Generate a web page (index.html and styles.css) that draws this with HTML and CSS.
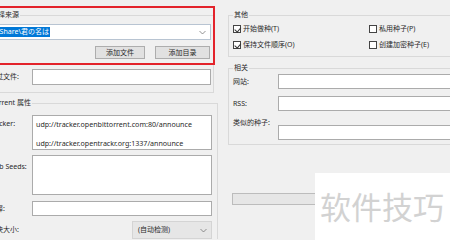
FILE: index.html
```html
<!DOCTYPE html>
<html lang="zh-CN">
<head>
  <meta charset="UTF-8">
  <title>创建 Torrent</title>
  <link rel="stylesheet" href="styles.css">
</head>
<body>
  <div class="Dialog">
    <div class="LeftColumn">
      <fieldset class="GroupBox SourceGroup">
        <legend>选择来源</legend>
        <div class="ComboBox PathCombo">
          <span class="Selected">\Share\君の名は</span>
          <svg class="Chevron" width="7" height="5" viewBox="0 0 7 5"><polyline points="0.5,1 3.5,4 6.5,1" fill="none" stroke="#666" stroke-width="0.7"/></svg>
        </div>
        <div class="ButtonRow">
          <button class="PushButton AddFile">添加文件</button>
          <button class="PushButton AddDir">添加目录</button>
        </div>
        <div class="FieldRow SkipRow">
          <label>跳过文件:</label>
          <div class="TextBox"></div>
        </div>
      </fieldset>

      <fieldset class="GroupBox PropsGroup">
        <legend>Torrent 属性</legend>
        <div class="FieldRow TrackerRow">
          <label>Tracker:</label>
          <div class="TextBox TrackerList">
            <div>udp://tracker.openbittorrent.com:80/announce</div>
            <div>udp://tracker.opentrackr.org:1337/announce</div>
          </div>
        </div>
        <div class="FieldRow SeedsRow">
          <label>Web Seeds:</label>
          <div class="TextBox SeedsList"></div>
        </div>
        <div class="FieldRow CommentRow">
          <label>注释:</label>
          <div class="TextBox"></div>
        </div>
        <div class="FieldRow PieceRow">
          <label>分块大小:</label>
          <div class="ComboBox PieceCombo">
            <span>(自动检测)</span>
            <svg class="Chevron" width="7" height="5" viewBox="0 0 7 5"><polyline points="0.5,1 3.5,4 6.5,1" fill="none" stroke="#666" stroke-width="0.7"/></svg>
          </div>
        </div>
      </fieldset>
      <div class="Highlight"></div>
    </div>

    <div class="RightColumn">
      <fieldset class="GroupBox OtherGroup">
        <legend>其他</legend>
        <div class="CheckGrid">
          <label class="Check"><span class="Box checked"></span>开始做种(T)</label>
          <label class="Check"><span class="Box"></span>私用种子(P)</label>
          <label class="Check"><span class="Box checked"></span>保持文件顺序(O)</label>
          <label class="Check"><span class="Box"></span>创建加密种子(E)</label>
        </div>
      </fieldset>

      <fieldset class="GroupBox RelatedGroup">
        <legend>相关</legend>
        <div class="FieldRow">
          <label>网站:</label>
          <div class="TextBox"></div>
        </div>
        <div class="FieldRow">
          <label>RSS:</label>
          <div class="TextBox"></div>
        </div>
        <div class="FieldRow SimilarRow">
          <label>类似的种子:</label>
          <div class="TextBox"></div>
        </div>
      </fieldset>

      <div class="ProgressBar"></div>
    </div>
  </div>

  <div class="Watermark">软件技巧</div>
</body>
</html>
```

FILE: styles.css
```css
* {
  margin: 0;
  padding: 0;
  box-sizing: border-box;
}

body {
  width: 450px;
  height: 240px;
  overflow: hidden;
  position: relative;
  background: #f0f0f0;
  font-family: "Segoe UI", "Noto Sans", "Noto Sans CJK SC", sans-serif;
  font-size: 7px;
  line-height: 12px;
  color: #2a2a2a;
}

.Dialog {
  display: grid;
  grid-template-columns: 238px 240px;
  column-gap: 10px;
  margin-left: -20px;
}

/* Group boxes */
.GroupBox {
  border: 1px solid #d9d9d9;
}

.GroupBox legend {
  padding: 0 1px;
  line-height: 12px;
}

.LeftColumn {
  position: relative;
}

.SourceGroup {
  margin-top: 9px;
  width: 234px;
  padding: 3px 2px 7px 8px;
}

.SourceGroup legend {
  margin-left: 1px;
}

.PropsGroup {
  margin-top: 4px;
  width: 238px;
  height: 142px;
  border-bottom: none;
  padding: 3px 5px 0 8px;
}

.PropsGroup legend {
  margin-left: 1px;
}

.Highlight {
  position: absolute;
  top: 6px;
  left: -10px;
  width: 245px;
  height: 59px;
  border: 2px solid #e3232b;
}

/* Inputs */
.TextBox {
  background: #fff;
  border: 1px solid #ababab;
  height: 16px;
}

.ComboBox {
  display: flex;
  align-items: center;
  justify-content: space-between;
  height: 16px;
  border: 1px solid #b8c4d2;
  background: #fff;
  padding: 0 4px 0 2px;
}

.Chevron {
  flex-shrink: 0;
}

.PathCombo {
  padding-left: 6px;
}

.PathCombo .Selected {
  background: #0078d7;
  color: #fff;
  padding: 0 1px;
  line-height: 10px;
}

.ButtonRow {
  display: flex;
  justify-content: flex-end;
  gap: 10px;
  margin-top: 6px;
  padding-right: 1px;
}

.PushButton {
  height: 13px;
  border: 1px solid #adadad;
  background: #e1e1e1;
  font: inherit;
  line-height: 11px;
  color: #2a2a2a;
}

.AddFile { width: 50px; }
.AddDir { width: 55px; }

.FieldRow {
  display: grid;
  grid-template-columns: 43px 1fr;
  align-items: center;
}

.FieldRow label {
  white-space: nowrap;
}

.SkipRow {
  margin-top: 10px;
}

.TrackerRow {
  margin-top: 3px;
  align-items: start;
}

.TrackerRow label {
  padding-top: 3px;
}

.TrackerList {
  height: 35px;
  font-size: 7.1px;
  line-height: 10px;
  padding: 3px 0 0 3px;
  display: flex;
  flex-direction: column;
  gap: 9px;
}

.SeedsRow {
  margin-top: 5px;
  align-items: start;
}

.SeedsRow label {
  padding-top: 6px;
}

.SeedsList {
  height: 40px;
}

.CommentRow {
  margin-top: 6px;
}

.CommentRow .TextBox {
  height: 15px;
}

.PieceRow {
  margin-top: 5px;
}

.PieceCombo {
  justify-self: end;
  width: 80px;
  height: 18px;
  background: #e6e6e6;
  border-color: #d4d4d4;
  padding-left: 5px;
}

/* Right column */
.OtherGroup {
  margin-top: 9px;
  padding: 2px 0 5px 4px;
}

.CheckGrid {
  display: grid;
  grid-template-columns: 136px 1fr;
  row-gap: 4px;
}

.Check {
  display: flex;
  align-items: center;
  gap: 2px;
  height: 12px;
}

.Box {
  width: 8px;
  height: 8px;
  border: 1px solid #444;
  background: #fff;
  position: relative;
}

.Box.checked::after {
  content: '';
  position: absolute;
  left: 1.5px;
  top: 0;
  width: 2.5px;
  height: 4.5px;
  border-right: 1px solid #333;
  border-bottom: 1px solid #333;
  transform: rotate(40deg);
}

.RelatedGroup {
  margin-top: 5px;
  padding: 0 0 4px 4px;
}

.RelatedGroup .FieldRow {
  grid-template-columns: 45px 1fr;
  margin-bottom: 7px;
}

.RelatedGroup .TextBox {
  height: 15px;
}

.RelatedGroup .SimilarRow {
  align-items: start;
  margin-top: -1px;
  margin-bottom: 0;
}

.SimilarRow .TextBox {
  margin-top: 8px;
}

.ProgressBar {
  margin: 48px 0 0 4px;
  width: 200px;
  height: 12px;
  background: #e6e6e6;
  border: 1px solid #bcbcbc;
}

/* Watermark overlay */
.Watermark {
  position: absolute;
  right: 0;
  bottom: 0;
  width: 135px;
  height: 67px;
  background: #fff;
  color: #d2d2d2;
  font-family: "Noto Sans CJK SC", sans-serif;
  font-size: 31px;
  line-height: 40px;
  padding: 13px 0 0 5px;
}
```
